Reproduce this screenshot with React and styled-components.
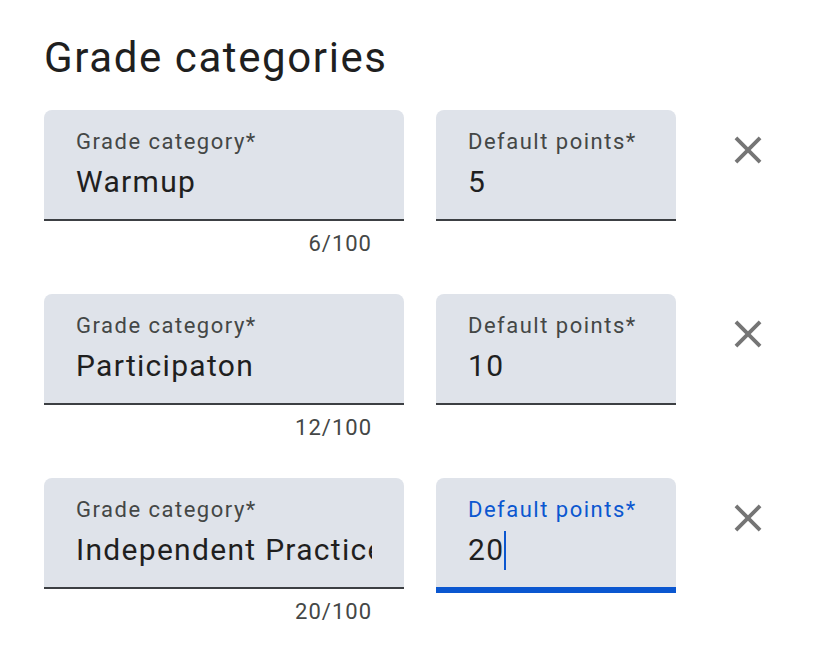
import React from "react";
import styled, { createGlobalStyle } from "styled-components";

const GlobalStyle = createGlobalStyle`
  html, body {
    margin: 0;
    padding: 0;
    background: #ffffff;
    font-family: Roboto, "Noto Sans", Arial, sans-serif;
  }
`;

/* page */

const Page = styled.div`
  padding: 33px 0 0 44px;
`;

const Title = styled.h1`
  margin: 0 0 27px;
  font-size: 42px;
  line-height: 50px;
  font-weight: 400;
  color: #1f1f1f;
  letter-spacing: 1.6px;
`;

const List = styled.div`
  display: flex;
  flex-direction: column;
  gap: 38px;
`;

/* one category row */

const Row = styled.div`
  display: flex;
  align-items: flex-start;
  gap: 32px;
`;

const FieldColumn = styled.div`
  display: flex;
  flex-direction: column;
  width: ${(p) => p.width}px;
`;

const Field = styled.div`
  box-sizing: border-box;
  height: ${(p) => (p.focused ? 115 : 111)}px;
  padding: 20px 32px 0;
  background: #dfe3ea;
  border-radius: 8px 8px 0 0;
  border-bottom: ${(p) => (p.focused ? "6px solid #0b57d0" : "2px solid #3c3f43")};
  margin-bottom: ${(p) => (p.focused ? -4 : 0)}px;
`;

const Label = styled.div`
  font-size: 22px;
  line-height: 24px;
  letter-spacing: 1.5px;
  color: ${(p) => (p.focused ? "#0b57d0" : "#444746")};
  white-space: nowrap;
`;

const Value = styled.div`
  margin-top: 8px;
  font-size: 30px;
  line-height: 40px;
  letter-spacing: 1.3px;
  color: #1f1f1f;
  white-space: nowrap;
  overflow: hidden;
  display: flex;
  align-items: center;
`;

const Caret = styled.span`
  display: inline-block;
  width: 2px;
  height: 39px;
  background: #0b57d0;
`;

const Counter = styled.div`
  padding: 11px 32px 0 0;
  text-align: right;
  font-size: 22px;
  line-height: 24px;
  letter-spacing: 1px;
  color: #444746;
`;

const RemoveButton = styled.button`
  width: 48px;
  height: 48px;
  margin: 16px 0 0 16px;
  padding: 0;
  border: none;
  background: transparent;
  display: flex;
  align-items: center;
  justify-content: center;
  cursor: pointer;

  & svg {
    width: 46px;
    height: 46px;
    fill: #757575;
  }
`;

const CloseIcon = () => (
  <svg viewBox="0 0 24 24">
    <path d="M19 6.41 17.59 5 12 10.59 6.41 5 5 6.41 10.59 12 5 17.59 6.41 19 12 13.41 17.59 19 19 17.59 13.41 12z" />
  </svg>
);

const categories = [
  { name: "Warmup", points: "5", count: "6/100" },
  { name: "Participaton", points: "10", count: "12/100" },
  { name: "Independent Practice", points: "20", count: "20/100", focused: true },
];

const CategoryRow = ({ name, points, count, focused }) => (
  <Row>
    <FieldColumn width={360}>
      <Field>
        <Label>Grade category*</Label>
        <Value>{name}</Value>
      </Field>
      <Counter>{count}</Counter>
    </FieldColumn>
    <FieldColumn width={240}>
      <Field focused={focused}>
        <Label focused={focused}>Default points*</Label>
        <Value>
          {points}
          {focused && <Caret />}
        </Value>
      </Field>
    </FieldColumn>
    <RemoveButton aria-label="Remove">
      <CloseIcon />
    </RemoveButton>
  </Row>
);

export default function App() {
  return (
    <>
      <GlobalStyle />
      <Page>
        <Title>Grade categories</Title>
        <List>
          {categories.map((c) => (
            <CategoryRow key={c.name} {...c} />
          ))}
        </List>
      </Page>
    </>
  );
}
